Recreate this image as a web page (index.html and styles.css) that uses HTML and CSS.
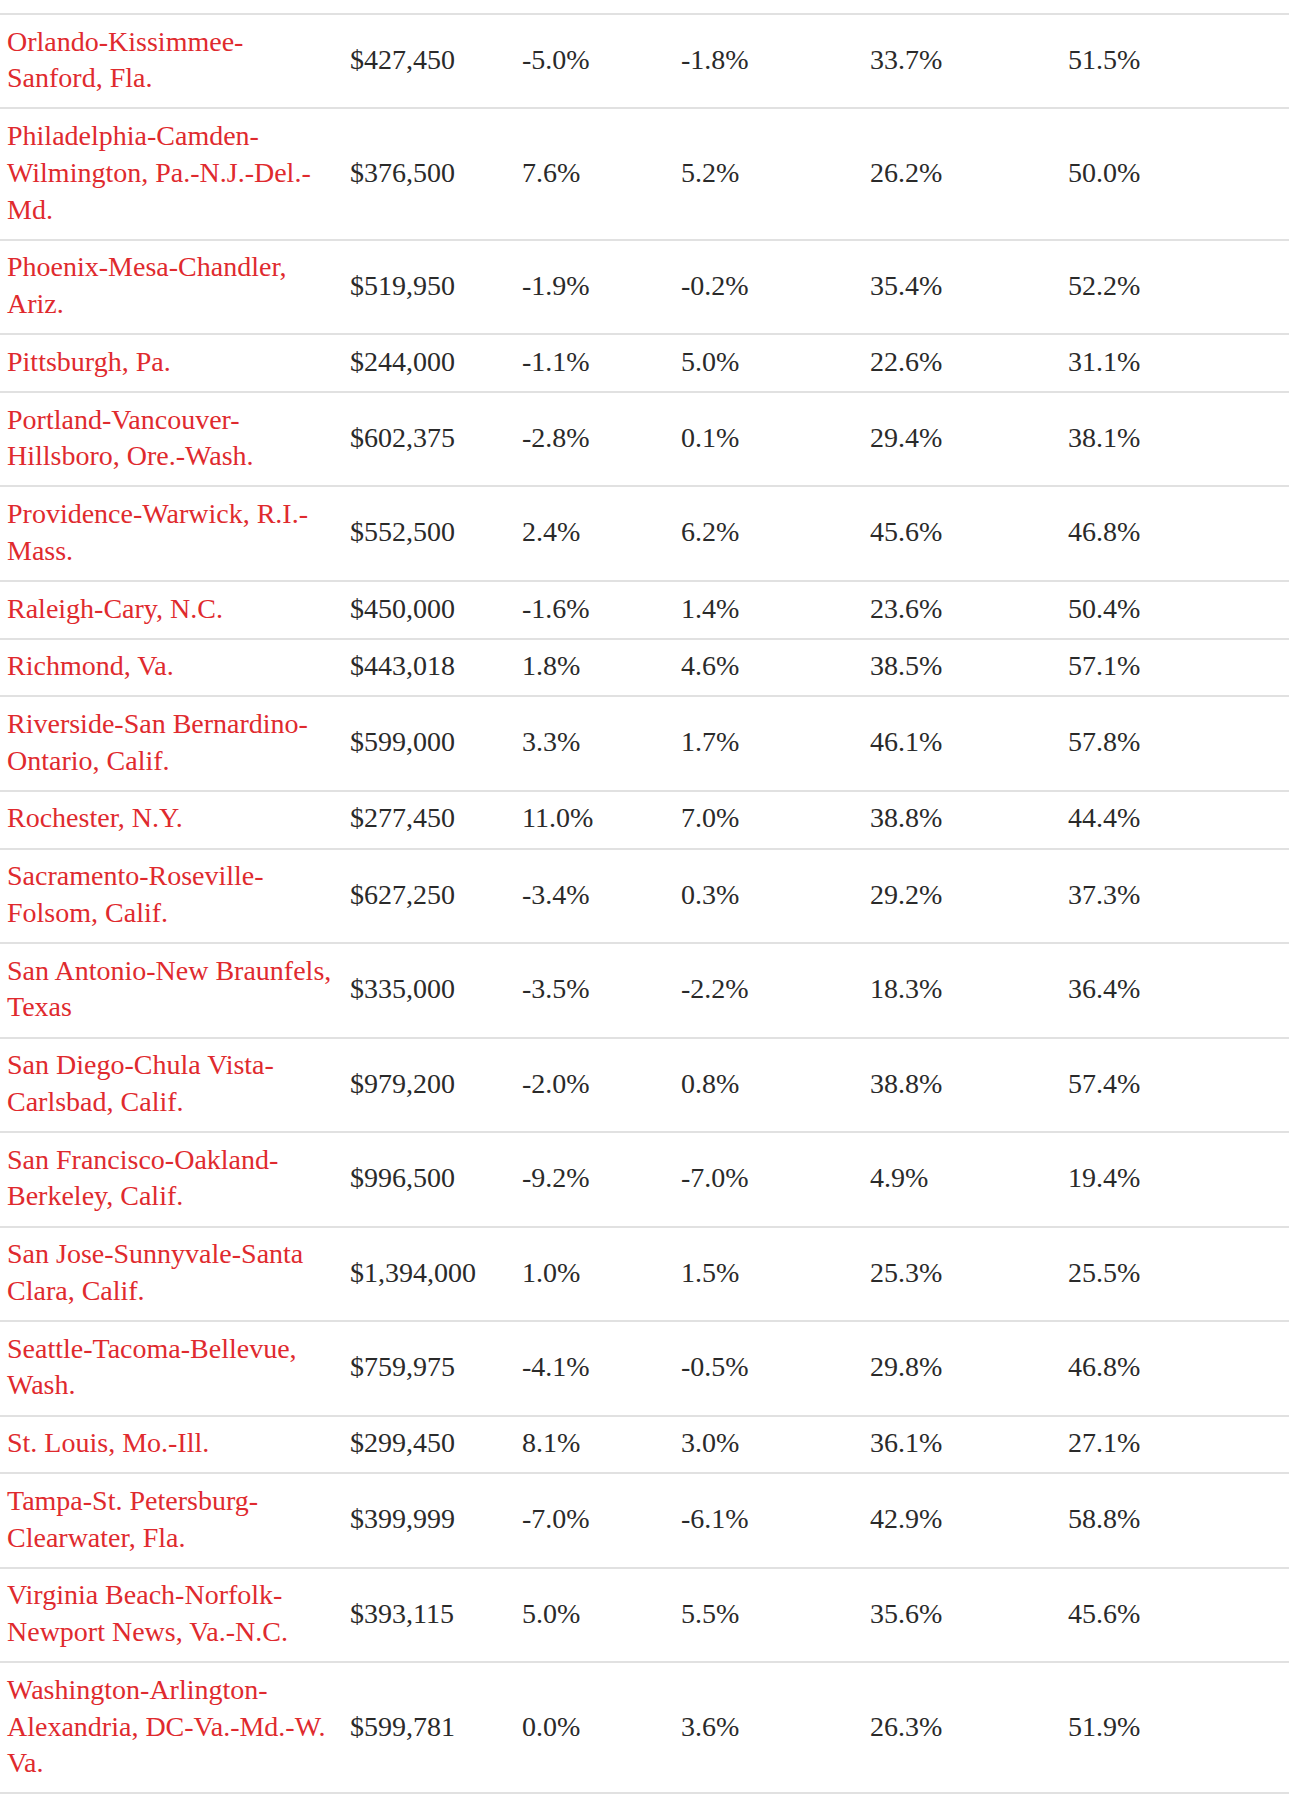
FILE: index.html
```html
<!DOCTYPE html>
<html lang="en">
<head>
<meta charset="utf-8">
<title>Metro home prices</title>
<link rel="stylesheet" href="styles.css">
</head>
<body>
<table class="data">
  <colgroup>
    <col class="c-name"><col class="c-price"><col class="c-a"><col class="c-b"><col class="c-c"><col class="c-d">
  </colgroup>
  <tbody>
    <tr><td><a class="metro" href="#">Orlando-Kissimmee-<br>Sanford, Fla.</a></td><td>$427,450</td><td>-5.0%</td><td>-1.8%</td><td>33.7%</td><td>51.5%</td></tr>
    <tr><td><a class="metro" href="#">Philadelphia-Camden-<br>Wilmington, Pa.-N.J.-Del.-<br>Md.</a></td><td>$376,500</td><td>7.6%</td><td>5.2%</td><td>26.2%</td><td>50.0%</td></tr>
    <tr><td><a class="metro" href="#">Phoenix-Mesa-Chandler,<br>Ariz.</a></td><td>$519,950</td><td>-1.9%</td><td>-0.2%</td><td>35.4%</td><td>52.2%</td></tr>
    <tr><td><a class="metro" href="#">Pittsburgh, Pa.</a></td><td>$244,000</td><td>-1.1%</td><td>5.0%</td><td>22.6%</td><td>31.1%</td></tr>
    <tr><td><a class="metro" href="#">Portland-Vancouver-<br>Hillsboro, Ore.-Wash.</a></td><td>$602,375</td><td>-2.8%</td><td>0.1%</td><td>29.4%</td><td>38.1%</td></tr>
    <tr><td><a class="metro" href="#">Providence-Warwick, R.I.-<br>Mass.</a></td><td>$552,500</td><td>2.4%</td><td>6.2%</td><td>45.6%</td><td>46.8%</td></tr>
    <tr><td><a class="metro" href="#">Raleigh-Cary, N.C.</a></td><td>$450,000</td><td>-1.6%</td><td>1.4%</td><td>23.6%</td><td>50.4%</td></tr>
    <tr><td><a class="metro" href="#">Richmond, Va.</a></td><td>$443,018</td><td>1.8%</td><td>4.6%</td><td>38.5%</td><td>57.1%</td></tr>
    <tr><td><a class="metro" href="#">Riverside-San Bernardino-<br>Ontario, Calif.</a></td><td>$599,000</td><td>3.3%</td><td>1.7%</td><td>46.1%</td><td>57.8%</td></tr>
    <tr><td><a class="metro" href="#">Rochester, N.Y.</a></td><td>$277,450</td><td>11.0%</td><td>7.0%</td><td>38.8%</td><td>44.4%</td></tr>
    <tr><td><a class="metro" href="#">Sacramento-Roseville-<br>Folsom, Calif.</a></td><td>$627,250</td><td>-3.4%</td><td>0.3%</td><td>29.2%</td><td>37.3%</td></tr>
    <tr><td><a class="metro" href="#">San Antonio-New Braunfels,<br>Texas</a></td><td>$335,000</td><td>-3.5%</td><td>-2.2%</td><td>18.3%</td><td>36.4%</td></tr>
    <tr><td><a class="metro" href="#">San Diego-Chula Vista-<br>Carlsbad, Calif.</a></td><td>$979,200</td><td>-2.0%</td><td>0.8%</td><td>38.8%</td><td>57.4%</td></tr>
    <tr><td><a class="metro" href="#">San Francisco-Oakland-<br>Berkeley, Calif.</a></td><td>$996,500</td><td>-9.2%</td><td>-7.0%</td><td>4.9%</td><td>19.4%</td></tr>
    <tr><td><a class="metro" href="#">San Jose-Sunnyvale-Santa<br>Clara, Calif.</a></td><td>$1,394,000</td><td>1.0%</td><td>1.5%</td><td>25.3%</td><td>25.5%</td></tr>
    <tr><td><a class="metro" href="#">Seattle-Tacoma-Bellevue,<br>Wash.</a></td><td>$759,975</td><td>-4.1%</td><td>-0.5%</td><td>29.8%</td><td>46.8%</td></tr>
    <tr><td><a class="metro" href="#">St. Louis, Mo.-Ill.</a></td><td>$299,450</td><td>8.1%</td><td>3.0%</td><td>36.1%</td><td>27.1%</td></tr>
    <tr><td><a class="metro" href="#">Tampa-St. Petersburg-<br>Clearwater, Fla.</a></td><td>$399,999</td><td>-7.0%</td><td>-6.1%</td><td>42.9%</td><td>58.8%</td></tr>
    <tr><td><a class="metro" href="#">Virginia Beach-Norfolk-<br>Newport News, Va.-N.C.</a></td><td>$393,115</td><td>5.0%</td><td>5.5%</td><td>35.6%</td><td>45.6%</td></tr>
    <tr><td><a class="metro" href="#">Washington-Arlington-<br>Alexandria, DC-Va.-Md.-W.<br>Va.</a></td><td>$599,781</td><td>0.0%</td><td>3.6%</td><td>26.3%</td><td>51.9%</td></tr>
  </tbody>
</table>
</body>
</html>
```
FILE: styles.css
```css
html, body {
  margin: 0;
  padding: 0;
  background: #ffffff;
}

.data {
  margin-top: 13px;
  width: 1289px;
  table-layout: fixed;
  border-collapse: collapse;
  border-top: 2px solid #e1e1e1;
  font-family: "Liberation Serif", "Times New Roman", serif;
  font-size: 28px;
  line-height: 36.75px;
  color: #2a2a2a;
}

.c-name { width: 343px; }
.c-price { width: 172px; }
.c-a { width: 159px; }
.c-b { width: 189px; }
.c-c { width: 198px; }
.c-d { width: 228px; }

.data td {
  padding: 8.6px 0 10.4px 7px;
  vertical-align: middle;
  border-bottom: 2px solid #e1e1e1;
  white-space: nowrap;
}

.metro {
  color: #df2a2e;
  text-decoration: none;
}
```
